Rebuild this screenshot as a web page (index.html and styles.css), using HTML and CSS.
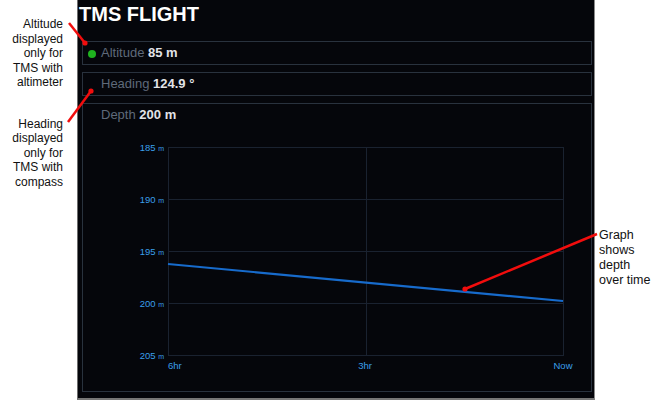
FILE: index.html
```html
<!DOCTYPE html>
<html lang="en">
<head>
    <meta charset="UTF-8">
    <title>TMS Flight</title>
    <link rel="stylesheet" href="styles.css">
</head>
<body>
    <div class="notes notes-left">
        <p class="note note-altitude">Altitude<br>displayed<br>only for<br>TMS with<br>altimeter</p>
        <p class="note note-heading">Heading<br>displayed<br>only for<br>TMS with<br>compass</p>
    </div>

    <div class="panel">
        <h1 class="title">TMS FLIGHT</h1>
        <div class="reading">
            <span class="dot"></span><span class="label">Altitude</span> <span class="value">85 m</span>
        </div>
        <div class="reading plain">
            <span class="label">Heading</span> <span class="value">124.9 °</span>
        </div>
        <div class="reading depth">
            <div class="depth-row"><span class="label">Depth</span> <span class="value">200 m</span></div>
            <svg class="chart" width="508" height="265" viewBox="0 0 508 265">
                <g class="grid">
                    <line x1="85" y1="21.5" x2="480" y2="21.5"/>
                    <line x1="85" y1="73.5" x2="480" y2="73.5"/>
                    <line x1="85" y1="125.5" x2="480" y2="125.5"/>
                    <line x1="85" y1="177.5" x2="480" y2="177.5"/>
                    <line x1="85" y1="229.5" x2="480" y2="229.5"/>
                    <line x1="85.5" y1="21" x2="85.5" y2="230"/>
                    <line x1="283.5" y1="21" x2="283.5" y2="230"/>
                    <line x1="480.5" y1="21" x2="480.5" y2="230"/>
                </g>
                <g class="ylabels">
                    <text x="81" y="25">185 <tspan class="unit">m</tspan></text>
                    <text x="81" y="77">190 <tspan class="unit">m</tspan></text>
                    <text x="81" y="129">195 <tspan class="unit">m</tspan></text>
                    <text x="81" y="181">200 <tspan class="unit">m</tspan></text>
                    <text x="81" y="233">205 <tspan class="unit">m</tspan></text>
                </g>
                <g class="xlabels">
                    <text x="85" y="243">6hr</text>
                    <text x="282" y="243" text-anchor="middle">3hr</text>
                    <text x="480" y="243" text-anchor="middle">Now</text>
                </g>
                <line class="series" x1="85" y1="138" x2="480" y2="175"/>
            </svg>
        </div>
    </div>

    <div class="notes notes-right">
        <p class="note note-graph">Graph<br>shows<br>depth<br>over time</p>
    </div>

    <!-- callout arrows laid over the screenshot -->
    <svg class="callouts" width="672" height="400" viewBox="0 0 672 400">
        <line x1="69" y1="23" x2="85" y2="43"/>
        <circle cx="85" cy="43" r="2.6"/>
        <line x1="68" y1="122" x2="91" y2="91"/>
        <circle cx="91" cy="91" r="2.6"/>
        <line x1="597" y1="234" x2="465" y2="289"/>
        <circle cx="465" cy="289" r="2.6"/>
    </svg>
</body>
</html>
```

FILE: styles.css
```css
:root {
    --panel-bg: #05060b;
    --box-border: #29323e;
    --label-color: #5f6a7a;
    --value-color: #e2e4e8;
    --axis-color: #3a9fea;
    --grid-color: #1a2230;
    --series-color: #176bcc;
    --callout-color: #f20d0d;
}

body {
    margin: 0;
    height: 400px;
    background: #fff;
    display: flex;
    font-family: 'Liberation Sans', Arial, sans-serif;
    position: relative;
    overflow: hidden;
}

.notes {
    color: #111;
    font-size: 12px;
    line-height: 14.5px;
}

.note {
    margin: 0;
}

.notes-left {
    width: 63px;
    flex: none;
    padding-right: 14px;
    text-align: right;
}

.note-altitude {
    padding-top: 17px;
}

.note-heading {
    margin-top: 27px;
}

.notes-right {
    flex: 1;
    padding-left: 4px;
    font-size: 12.5px;
    line-height: 15px;
}

.note-graph {
    padding-top: 228px;
}

.panel {
    flex: none;
    width: 510px;
    height: 398px;
    background: var(--panel-bg);
    border-left: 1px solid #6e6e6e;
    border-right: 1px solid #8a8a8a;
    border-bottom: 2px solid #777;
    padding: 0 2px 0 4px;
}

.title {
    margin: 0 0 15px -3px;
    padding-top: 2px;
    color: #fff;
    font-size: 20px;
    line-height: 24px;
    font-weight: bold;
}

.reading {
    height: 22px;
    border: 1px solid var(--box-border);
    padding-left: 5px;
    font-size: 13px;
    line-height: 22px;
    margin-bottom: 7px;
}

.reading.plain {
    padding-left: 18px;
}

.dot {
    display: inline-block;
    width: 8px;
    height: 8px;
    border-radius: 50%;
    background: #1fb21f;
    margin-right: 5px;
    vertical-align: -1px;
}

.label {
    color: var(--label-color);
}

.value {
    color: var(--value-color);
    font-weight: bold;
}

.reading.depth {
    height: auto;
    padding-left: 0;
    margin-bottom: 0;
}

.depth-row {
    height: 22px;
    padding-left: 18px;
}

.chart {
    display: block;
}

.grid line {
    stroke: var(--grid-color);
    stroke-width: 1;
}

.ylabels text,
.xlabels text {
    fill: var(--axis-color);
    font-family: 'Liberation Sans', Arial, sans-serif;
    font-size: 9.5px;
}

.ylabels text {
    text-anchor: end;
}

.unit {
    font-size: 7px;
}

.series {
    stroke: var(--series-color);
    stroke-width: 2.2;
}

.callouts {
    position: absolute;
    left: 0;
    top: 0;
    pointer-events: none;
}

.callouts line {
    stroke: var(--callout-color);
    stroke-width: 2.5;
}

.callouts circle {
    fill: var(--callout-color);
}
```
